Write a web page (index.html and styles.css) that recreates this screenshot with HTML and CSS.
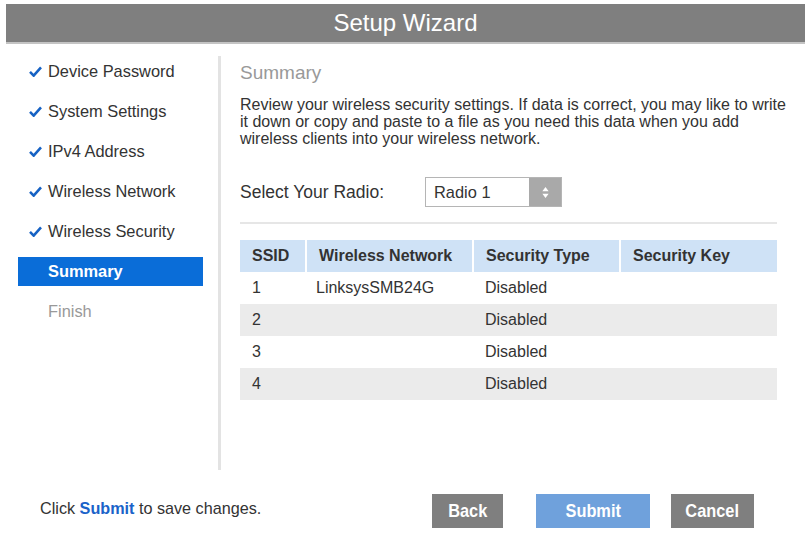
FILE: index.html
```html
<!DOCTYPE html>
<html>
<head>
<meta charset="utf-8">
<link rel="stylesheet" href="styles.css">
</head>
<body>
<div class="header">Setup Wizard</div>
<div class="main">
  <nav class="sidebar">
    <div class="step done"><svg class="check" viewBox="0 0 14 12"><path d="M1 6.5 L5 10.5 L13 1.5" /></svg>Device Password</div>
    <div class="step done"><svg class="check" viewBox="0 0 14 12"><path d="M1 6.5 L5 10.5 L13 1.5" /></svg>System Settings</div>
    <div class="step done"><svg class="check" viewBox="0 0 14 12"><path d="M1 6.5 L5 10.5 L13 1.5" /></svg>IPv4 Address</div>
    <div class="step done"><svg class="check" viewBox="0 0 14 12"><path d="M1 6.5 L5 10.5 L13 1.5" /></svg>Wireless Network</div>
    <div class="step done"><svg class="check" viewBox="0 0 14 12"><path d="M1 6.5 L5 10.5 L13 1.5" /></svg>Wireless Security</div>
    <div class="step active">Summary</div>
    <div class="step todo">Finish</div>
  </nav>
  <div class="divider"></div>
  <section class="content">
    <h2 class="title">Summary</h2>
    <p class="desc">Review your wireless security settings. If data is correct, you may like to write<br>it down or copy and paste to a file as you need this data when you add<br>wireless clients into your wireless network.</p>
    <div class="radio-row">
      <span class="radio-label">Select Your Radio:</span>
      <div class="select">
        <span class="select-value">Radio 1</span>
        <span class="select-btn"><svg viewBox="0 0 10 16"><path d="M5 2 L8.5 6.5 L1.5 6.5 Z M5 14 L8.5 9.5 L1.5 9.5 Z"/></svg></span>
      </div>
    </div>
    <div class="rule"></div>
    <table class="grid">
      <thead>
        <tr><th class="c1">SSID</th><th class="c2">Wireless Network</th><th class="c3">Security Type</th><th class="c4">Security Key</th></tr>
      </thead>
      <tbody>
        <tr><td>1</td><td>LinksysSMB24G</td><td>Disabled</td><td></td></tr>
        <tr class="alt"><td>2</td><td></td><td>Disabled</td><td></td></tr>
        <tr><td>3</td><td></td><td>Disabled</td><td></td></tr>
        <tr class="alt"><td>4</td><td></td><td>Disabled</td><td></td></tr>
      </tbody>
    </table>
  </section>
</div>
<div class="footer">
  <div class="hint">Click <b class="link">Submit</b> to save changes.</div>
  <div class="buttons">
    <button class="btn back"><span class="btn-text">Back</span></button>
    <button class="btn submit"><span class="btn-text">Submit</span></button>
    <button class="btn cancel"><span class="btn-text">Cancel</span></button>
  </div>
</div>
</body>
</html>
```
FILE: styles.css
```css
html, body {
  margin: 0;
  padding: 0;
  background: #fff;
}
body {
  font-family: "Liberation Sans", Arial, sans-serif;
  color: #333;
  width: 809px;
  height: 537px;
  overflow: hidden;
}
.header {
  margin: 4px 4px 0 6px;
  height: 38px;
  line-height: 38px;
  background: #7f7f7f;
  border-bottom: 2px solid #c4c4c4;
  color: #fff;
  text-align: center;
  font-size: 24px;
}
.main {
  display: flex;
  margin-top: 12px;
  height: 414px;
}
.sidebar {
  width: 218px;
  padding-top: 1px;
}
.step {
  margin-left: 18px;
  width: 185px;
  height: 29px;
  line-height: 29px;
  margin-bottom: 11px;
  padding-left: 30px;
  box-sizing: border-box;
  font-size: 16.4px;
  color: #333;
  position: relative;
}
.check {
  position: absolute;
  left: 11px;
  top: 9px;
  width: 13px;
  height: 11px;
  fill: none;
  stroke: #1662c4;
  stroke-width: 2.8;
  stroke-linejoin: miter;
}
.step.active {
  background: #0a6dd8;
  color: #fff;
  font-weight: bold;
}
.step.todo {
  color: #999;
}
.divider {
  width: 3px;
  background: #e3e3e3;
  height: 414px;
}
.content {
  padding-left: 19px;
  width: 537px;
}
.title {
  margin: 6px 0 0 0;
  font-size: 19px;
  font-weight: normal;
  color: #999;
  line-height: 22px;
}
.desc {
  margin: 12px 0 0 0;
  font-size: 16px;
  line-height: 17px;
  color: #333;
  width: 570px;
  white-space: nowrap;
}
.radio-row {
  display: flex;
  align-items: center;
  margin-top: 30px;
}
.radio-label {
  width: 185px;
  font-size: 17.5px;
  color: #333;
}
.select {
  display: flex;
  width: 137px;
  height: 30px;
  box-sizing: border-box;
  border: 1px solid #b5b5b5;
}
.select-value {
  flex: 1;
  padding-left: 8px;
  line-height: 28px;
  font-size: 16.4px;
  color: #333;
}
.select-btn {
  width: 32px;
  background: #a9a9a9;
  display: flex;
  align-items: center;
  justify-content: center;
}
.select-btn svg {
  width: 9px;
  height: 15px;
  fill: #fff;
}
.rule {
  margin-top: 15px;
  height: 2px;
  background: #e6e6e6;
  width: 537px;
}
.grid {
  margin-top: 16px;
  width: 537px;
  border-collapse: collapse;
  font-size: 16px;
}
.grid th {
  background: #cfe2f6;
  height: 32px;
  text-align: left;
  padding: 0 0 0 12px;
  font-weight: bold;
  color: #333;
  border-left: 2px solid #fff;
}
.grid th.c1 { border-left: none; width: 53px; }
.grid th.c2 { width: 153px; }
.grid th.c3 { width: 133px; }
.grid td {
  height: 32px;
  padding: 0 0 0 12px;
  color: #333;
}
.grid td:nth-child(2) { padding-left: 10px; }
.grid tr.alt td {
  background: #ebebeb;
}
.footer {
  display: flex;
  align-items: center;
  margin-top: 24px;
  height: 34px;
}
.hint {
  margin-left: 40px;
  width: 392px;
  font-size: 16.2px;
  color: #333;
  margin-top: -6px;
}
.link {
  color: #1a63c9;
}
.buttons {
  display: flex;
}
.btn {
  height: 34px;
  border: none;
  color: #fff;
  font-family: "Liberation Sans", Arial, sans-serif;
  font-weight: bold;
  font-size: 19px;
  padding: 0;
}
.btn-text {
  display: inline-block;
  transform: scaleX(0.86);
}
.back { width: 71px; background: #7f7f7f; }
.submit { width: 114px; background: #6fa1dc; margin-left: 33px; }
.cancel { width: 83px; background: #7f7f7f; margin-left: 21px; }
```
